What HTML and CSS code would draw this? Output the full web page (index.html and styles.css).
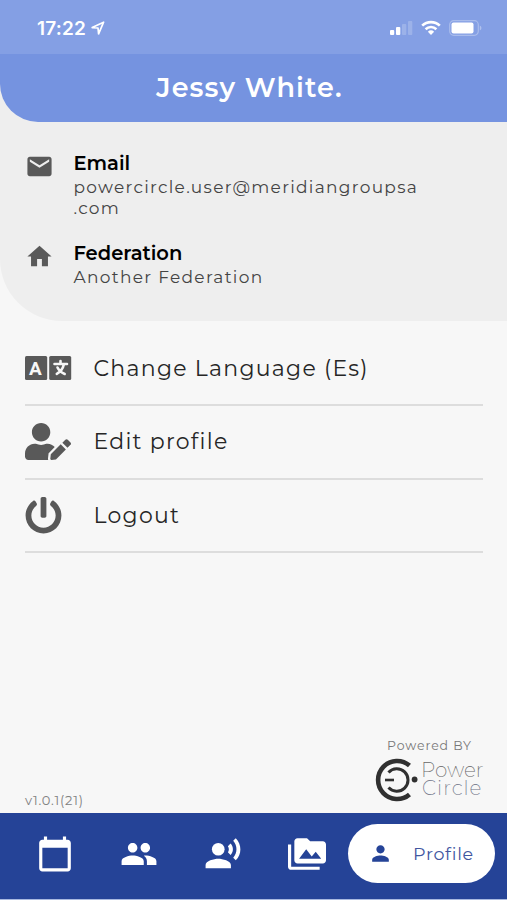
FILE: index.html
```html
<!DOCTYPE html>
<html lang="en">
<head>
<meta charset="utf-8">
<title>Profile</title>
<link rel="stylesheet" href="styles.css">
</head>
<body>
<div class="app">
  <div class="top">
    <section class="details">
      <header class="header">
        <div class="status">
          <span class="time">17:22</span>
          <svg class="arrow" viewBox="0 0 14 14"><path d="M1.2 6.6 12.6 1.2 7.6 12.8 7 7z" fill="none" stroke="#fff" stroke-width="1.7" stroke-linejoin="round"/></svg>
          <div class="indicators">
            <svg width="23" height="16" viewBox="0 0 23 16"><g fill="#fff"><rect y="10" width="4.2" height="5" rx="1"/><rect x="6" y="7" width="4.3" height="8" rx="1"/><g opacity=".2"><rect x="12" y="4" width="4.3" height="11" rx="1"/><rect x="18" y="1" width="4.3" height="14" rx="1"/></g></g></svg>
            <svg class="wifi" width="20" height="16" viewBox="0 0 20 16"><g fill="none" stroke="#fff" stroke-width="2.6"><path d="M1.2 5.7a12.5 12.5 0 0 1 17.6 0"/><path d="M4.6 9.2a7.7 7.7 0 0 1 10.8 0"/></g><path d="M10 15 6.9 11.8a4.5 4.5 0 0 1 6.2 0z" fill="#fff"/></svg>
            <svg class="battery" width="33" height="16" viewBox="0 0 33 16"><rect x=".7" y=".7" width="28.6" height="14.6" rx="4" fill="none" stroke="#fff" stroke-opacity=".3" stroke-width="1.2"/><rect x="2.5" y="2.6" width="22" height="10.8" rx="2" fill="#fff"/><path d="M30.8 5.5q1.7.8 1.7 2.5t-1.7 2.5z" fill="#fff" opacity=".35"/></svg>
          </div>
        </div>
        <h1 class="name">Jessy White.</h1>
      </header>
      <div class="fact">
        <svg class="fact-icon" viewBox="0 0 24 24"><path d="M20 4H4c-1.1 0-1.99.9-1.99 2L2 18c0 1.1.9 2 2 2h16c1.1 0 2-.9 2-2V6c0-1.1-.9-2-2-2zm0 4l-8 5-8-5V6l8 5 8-5v2z"/></svg>
        <div><h2 class="label">Email</h2><p class="value">powercircle.user@meridiangroupsa<br>.com</p></div>
      </div>
      <div class="fact">
        <svg class="fact-icon" viewBox="0 0 24 24"><path d="M10 20v-6h4v6h5v-8h3L12 3 2 12h3v8z"/></svg>
        <div><h2 class="label">Federation</h2><p class="value">Another Federation</p></div>
      </div>
    </section>
  </div>
  <main class="menu">
    <a class="item"><span class="item-icon"><svg width="47" height="24" viewBox="0 0 47 24"><rect width="22.2" height="24" rx="1.5"/><rect x="24.2" width="22" height="24" rx="1.5"/><text class="glyph-a" x="10.5" y="18.8" text-anchor="middle">A</text><path d="M29.5 8h12.5M35.5 5v3M31.8 17.8c3.8-2 6.2-5.3 7.1-9.5M32.5 11.5c1.5 3.2 4.3 5.3 7.2 6.5" fill="none" stroke="#f7f7f7" stroke-width="2.6" stroke-linecap="round"/></svg></span><span>Change Language (Es)</span></a>
    <a class="item"><span class="item-icon"><svg width="46" height="37" viewBox="0 0 640 512"><path d="M224 256c70.7 0 128-57.3 128-128S294.7 0 224 0 96 57.3 96 128s57.3 128 128 128zm89.6 32h-16.7c-22.2 10.2-46.9 16-72.9 16s-50.6-5.8-72.9-16h-16.7C60.2 288 0 348.2 0 422.4V464c0 26.5 21.5 48 48 48h274.9c-2.4-6.8-3.4-14-2.6-21.3l6.8-60.9 1.2-11.1 7.9-7.9 77.3-77.3c-24.5-27.7-60-45.5-99.9-45.5zm45.3 145.3l-6.8 61c-1.1 10.2 7.5 18.8 17.6 17.6l60.9-6.8 137.9-137.9-71.7-71.7-137.9 137.8zM633 268.9L595.1 231c-9.3-9.3-24.5-9.3-33.8 0l-37.8 37.8-4.1 4.1 71.8 71.7 41.8-41.8c9.3-9.4 9.3-24.5 0-33.9z"/></svg></span><span>Edit profile</span></a>
    <a class="item"><span class="item-icon"><svg width="37" height="37" viewBox="0 0 512 512"><path d="M400 54.1c63 45 104 118.6 104 201.9 0 136.8-110.8 247.7-247.5 248C120 504.3 8.2 393 8 256.4 7.9 173.1 48.9 99.3 111.8 54.2c11.7-8.3 28-4.8 35 7.7L162.6 90c5.9 10.5 3.1 23.8-6.6 31-41.5 30.8-68 79.6-68 134.9-.1 92.3 74.5 168.1 168 168.1 91.6 0 168.6-74.2 168-169.1-.3-51.8-24.7-101.8-68.1-134-9.7-7.2-12.4-20.5-6.5-30.9l15.8-28.1c7-12.4 23.2-16.1 34.8-7.8zM296 264V24c0-13.3-10.7-24-24-24h-32c-13.3 0-24 10.7-24 24v240c0 13.3 10.7 24 24 24h32c13.3 0 24-10.7 24-24z"/></svg></span><span>Logout</span></a>
  </main>
  <footer class="credits">
    <span class="version">v1.0.1(21)</span>
    <div class="powered">
      <span class="by">Powered BY</span>
      <div class="brand">
        <svg width="44" height="44" viewBox="0 0 44 44"><g fill="none" stroke="#303030"><path d="M34.5 7.6A19 19 0 1 0 34.5 36.4" stroke-width="4.6"/><path d="M13.5 14.5A11.2 11.2 0 1 1 13.5 29.5" stroke-width="3"/><path d="M10 22h9" stroke-width="2.6"/></g><circle cx="39.6" cy="21.5" r="2.9" fill="#303030"/></svg>
        <div class="brand-name"><span>Power</span><span class="circle">Circle</span></div>
      </div>
    </div>
  </footer>
  <nav class="nav">
    <svg class="nav-icon" viewBox="0 0 24 24"><path d="M20 3h-1V1h-2v2H7V1H5v2H4c-1.1 0-2 .9-2 2v16c0 1.1.9 2 2 2h16c1.1 0 2-.9 2-2V5c0-1.1-.9-2-2-2zm0 18H4V8h16v13z"/></svg>
    <svg class="nav-icon" viewBox="0 0 24 24"><path d="M16 11c1.66 0 2.99-1.34 2.99-3S17.66 5 16 5c-1.66 0-3 1.34-3 3s1.34 3 3 3zm-8 0c1.66 0 2.99-1.34 2.99-3S9.66 5 8 5C6.34 5 5 6.34 5 8s1.34 3 3 3zm0 2c-2.33 0-7 1.17-7 3.5V19h14v-2.5c0-2.33-4.67-3.5-7-3.5zm8 0c-.29 0-.62.02-.97.05 1.16.84 1.97 1.97 1.97 3.45V19h6v-2.5c0-2.33-4.67-3.5-7-3.5z"/></svg>
    <svg class="nav-icon" viewBox="0 0 24 24"><circle cx="9" cy="9" r="4"/><path d="M9 15c-2.67 0-8 1.34-8 4v2h16v-2c0-2.66-5.33-4-8-4zm7.76-9.64l-1.68 1.69c.84 1.18.84 2.71 0 3.89l1.68 1.69c2.02-2.02 2.02-5.07 0-7.27zM20.07 2l-1.63 1.63c2.77 3.02 2.77 7.56 0 10.74L20.07 16c3.9-3.89 3.91-9.95 0-14z"/></svg>
    <svg class="nav-icon" viewBox="0 0 24 24"><path d="M2 6H0v5h.01L0 20c0 1.1.9 2 2 2h18v-2H2V6zm20-2h-8l-2-2H6c-1.1 0-1.99.9-1.99 2L4 16c0 1.1.9 2 2 2h16c1.1 0 2-.9 2-2V6c0-1.1-.9-2-2-2zM7 15l4.5-6 3.5 4.51 2.5-3.01L21 15H7z"/></svg>
    <a class="pill"><svg class="pill-icon" viewBox="0 0 24 24"><path d="M12 12c2.21 0 4-1.79 4-4s-1.79-4-4-4-4 1.79-4 4 1.79 4 4 4zm0 2c-2.67 0-8 1.34-8 4v2h16v-2c0-2.66-5.33-4-8-4z"/></svg><span>Profile</span></a>
  </nav>
</div>
</body>
</html>
```
FILE: styles.css
```css
* { box-sizing: border-box; }
body { margin: 0; font-family: Montserrat, Inter, "Open Sans", sans-serif; }
h1, h2, p { margin: 0; }
svg { display: block; flex: none; }

.app { width: 507px; height: 900px; display: flex; flex-direction: column; background: #f7f7f7; border-bottom: 1px solid #a9b9e0; overflow: hidden; }

.details { height: 320.5px; background: #eee; border-radius: 0 0 0 62px; }
.header { height: 121.5px; margin-bottom: 30px; background: #7593e0; border-radius: 0 0 0 38px; overflow: hidden; }
.status { height: 54px; background: #849fe4; color: #fff; display: flex; align-items: flex-start; padding: 20px 25px 0 37px; }
.time { font: 600 19px/17px Inter, sans-serif; letter-spacing: .2px; width: 51px; white-space: nowrap; }
.arrow { width: 14px; height: 14px; margin: 1px 0 0 3px; }
.indicators { display: flex; margin-left: auto; }
.wifi { margin-left: 8px; }
.battery { margin-left: 8px; }
.name { height: 67px; line-height: 68px; text-align: center; color: #fff; font-size: 27px; font-weight: 600; letter-spacing: 1.1px; padding-right: 8px; }

.fact { display: flex; padding-left: 25px; min-height: 90.5px; }
.fact-icon { width: 29px; height: 29px; margin-right: 19.5px; fill: #595959; }
.label { font-size: 19.5px; line-height: 23px; font-weight: 600; color: #000; letter-spacing: 0; }
.value { font-size: 17px; line-height: 21px; margin-top: 2px; color: #444; letter-spacing: 1.3px; }

.menu { padding: 12.3px 24.5px 0 25px; flex: 1; }
.item { height: 73.4px; display: flex; align-items: center; border-bottom: 2px solid #ddd; font-size: 22px; color: #262626; letter-spacing: 1.27px; }
.item-icon { width: 68.5px; fill: #595959; }
.glyph-a { font: 700 19px Roboto, sans-serif; letter-spacing: 0; fill: #f7f7f7; }

.credits { display: flex; justify-content: space-between; align-items: flex-end; padding: 0 22px 5px 25px; }
.version { font-size: 13px; line-height: 16px; color: #808080; letter-spacing: .8px; }
.powered { width: 110px; }
.by { display: block; margin-left: 12px; font-size: 12.5px; line-height: 14px; color: #777; letter-spacing: .9px; white-space: nowrap; }
.brand { display: flex; margin-top: 5px; height: 50px; }
.brand-name { margin-left: 2px; font-size: 20px; line-height: 18px; font-weight: 200; color: #666; display: flex; flex-direction: column; padding-top: 3px; letter-spacing: .1px; }
.circle { padding-left: 1px; color: #6c7084; letter-spacing: 1px; }

.nav { height: 86.5px; flex: none; background: #254397; display: flex; padding-left: 36px; }
.nav-icon { width: 38px; height: 38px; margin: 22.5px 45.9px 0 0; fill: #fff; }
.pill { width: 147px; height: 59px; margin: 11.5px 0 0 -23.5px; border-radius: 30px; background: #fff; color: #41569f; display: flex; align-items: center; padding-left: 20px; font-size: 17.5px; letter-spacing: .7px; flex: none; }
.pill-icon { width: 25px; height: 25px; margin-right: 20px; fill: #254397; }
```
